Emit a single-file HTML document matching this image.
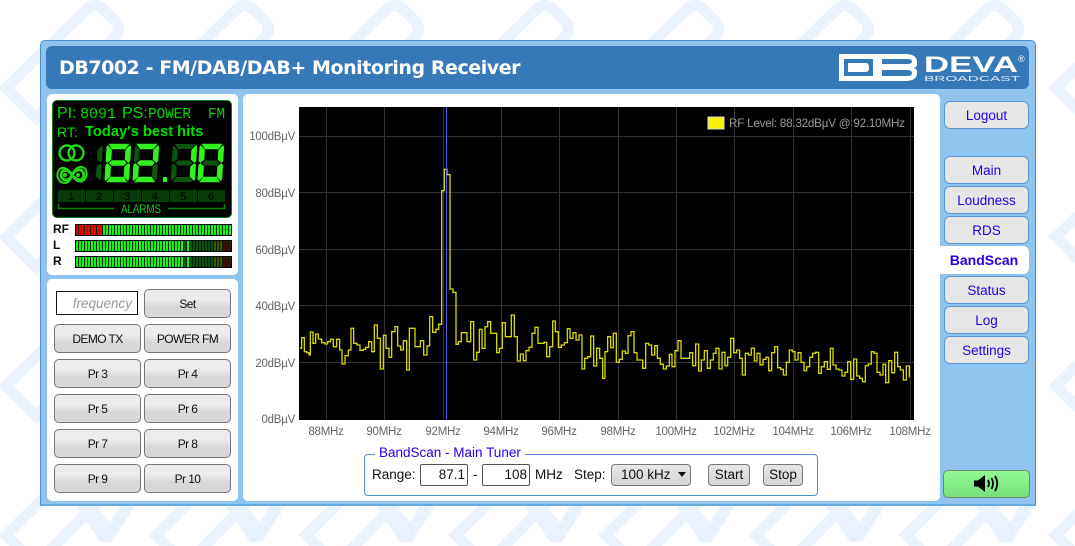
<!DOCTYPE html>
<html><head><meta charset="utf-8"><title>DB7002</title>
<style>
html,body{margin:0;padding:0;background:#fff}
body{width:1075px;height:546px;position:relative;overflow:hidden;font-family:"Liberation Sans",sans-serif;font-size:13.5px;color:#111}
.a{position:absolute;box-sizing:border-box}
.t{position:absolute;white-space:nowrap}
.b{position:absolute;box-sizing:border-box;width:87px;height:29px;border:1px solid #777;border-radius:5px;background:linear-gradient(#ececec 0,#ececec 35%,#d8d8d8 65%,#d8d8d8);text-align:center;font-size:12px;letter-spacing:-.6px;line-height:28px;color:#111}
.n{position:absolute;box-sizing:border-box;left:944px;width:85px;height:28px;border:1px solid #5a96d2;border-radius:6px;background:#e6e6e6;text-align:center;font-size:13.5px;line-height:27px;color:#2200ee}
.m{position:absolute;box-sizing:border-box;left:75px;width:157px;height:12px;border:1px solid #000;background:#000}
.m i{position:absolute;top:0;bottom:0;display:block;background:repeating-linear-gradient(90deg,var(--c) 0,var(--c) 2px,#062006 2px,#062006 3px)}
.s{position:absolute;box-sizing:border-box;height:22px;border:1px solid #777;border-radius:4px;background:linear-gradient(#e8e8e8,#d4d4d4);text-align:center;line-height:20px;font-size:13.5px;color:#111}
.i{position:absolute;box-sizing:border-box;height:22px;top:464px;border:1px solid #555;border-radius:2px;background:#fff;text-align:right;padding-right:2px;line-height:20px;font-size:13.5px;color:#111}
.y,.x{font-size:11.5px;letter-spacing:-.25px;color:#666;line-height:14px}
.y{position:absolute;right:780px;white-space:nowrap}
.x{position:absolute;top:425px;width:60px;text-align:center}
.l{fill:#33f020;stroke:#33f020;stroke-width:.6}.d{fill:#0c560c}
</style></head><body>

<svg class="a" style="left:0;top:0" width="1075" height="546">
<defs><pattern id="w" width="150" height="149" patternUnits="userSpaceOnUse" x="0" y="0">
<g fill="none" stroke="#eaf2fd" stroke-width="11">
<path d="M6 88 L88 8 Q96 2 104 10 L116 22 Q122 30 114 38 L36 118 Z"/>
<path d="M-144 88 L-62 8 Q-54 2 -46 10 L-34 22 Q-28 30 -36 38 L-114 118 Z"/>
<path d="M156 88 L238 8 Q246 2 254 10 L266 22 Q272 30 264 38 L186 118 Z"/>
<path d="M6 237 L88 157 Q96 151 104 159 L116 171 Q122 179 114 187 L36 267 Z"/>
</g>
<polygon points="75,58 95,58 110,75 120,58 135,58 112,95 100,95" fill="#eaf2fd"/>
<text x="0" y="0" transform="translate(103 96) rotate(-45)" font-family="Liberation Sans" font-size="13" fill="#e3eefb" letter-spacing="3">CAST</text>
</pattern></defs>
<rect width="1075" height="546" fill="url(#w)"/>
</svg>

<div class="a" style="left:40px;top:40px;width:996px;height:466px;background:#91c3ef;border:1px solid #4a90d2;border-bottom:2px solid #6aa8e0;border-radius:5px 5px 0 0"></div>
<div class="a" style="left:46px;top:46px;width:983px;height:43px;background:#3679b8;border-radius:6px"></div>
<div class="t" style="left:59px;top:55px;font-family:'DejaVu Sans',sans-serif;font-weight:bold;font-size:19px;line-height:26px;color:#fff;letter-spacing:-.45px">DB7002 - FM/DAB/DAB+ Monitoring Receiver</div>

<svg class="a" style="left:835px;top:48px" width="195" height="40">
<path fill="#fff" d="M4 6H70Q82 6 82 14V16Q82 19 79 20Q82 21 82 24V25Q82 33 70 33H4Z"/>
<path fill="#3679b8" d="M9 11H38V28H9ZM47 11H72Q77 11 77 13.5Q77 16 72 16H47ZM47 22H72Q77 22 77 25Q77 28 72 28H47Z"/>
<path fill="#fff" d="M13 15H31Q34 15 34 19.5Q34 24 31 24H13Z"/>
<text x="89" y="24" font-family="Liberation Sans" font-weight="bold" font-size="22" fill="#fff" textLength="94" lengthAdjust="spacingAndGlyphs">DEVA</text>
<text x="89" y="33" font-family="Liberation Sans" font-size="7" fill="#dce9f6" textLength="96" lengthAdjust="spacingAndGlyphs">BROADCAST</text>
<text x="183" y="14" font-family="Liberation Sans" font-size="9" fill="#fff">®</text>
</svg>

<!-- left panel 1 -->
<div class="a" style="left:47px;top:94px;width:191px;height:181px;background:#fff;border-radius:5px"></div>
<div class="a" style="left:52px;top:100px;width:180px;height:118px;background:#000;border:1px solid #0b7a0b;border-radius:5px"></div>
<div class="t" style="left:57px;top:105px;font-size:16px;line-height:18px;color:#00e000">PI:</div>
<div class="t" style="left:80px;top:106px;font-family:'Liberation Mono',monospace;font-size:15px;line-height:18px;color:#00d800">8091</div>
<div class="t" style="left:122px;top:105px;font-size:16px;line-height:18px;color:#00e000">PS:</div>
<div class="t" style="left:148px;top:106px;font-family:'Liberation Mono',monospace;font-size:14.5px;line-height:18px;color:#00d800;letter-spacing:-.15px;white-space:pre">POWER  FM</div>
<div class="t" style="left:57px;top:123px;font-size:14px;line-height:18px;color:#00e000">RT:</div>
<div class="t" style="left:85px;top:123px;font-weight:bold;font-size:14.7px;line-height:18px;color:#00e000">Today's best hits</div>

<svg class="a" style="left:0;top:0" width="240" height="230">
<title>92.10 MHz</title>
<g fill="none" stroke="#26d41c" stroke-width="2.4">
<circle cx="67" cy="153" r="7.5"/><circle cx="76" cy="153" r="7.5"/>
</g>
<g fill="none" stroke="#26d41c">
<path stroke-width="2" d="M72 175C68 168 62 166 59 170C55 176 59 183 65 183C69 183 71 179 72 175C74 170 78 166 82 167C87 168 88 175 85 179C81 184 75 181 72 175Z"/>
<path stroke-width="3" d="M72 175C69 170 64 169 62 172C60 176 62 180 66 180C69 180 71 178 72 175C74 171 78 169 81 170C84 172 85 176 82 179C79 181 75 179 72 175Z"/>
</g>
<circle cx="65" cy="175" r="2" fill="#26d41c"/><circle cx="78" cy="175" r="2" fill="#26d41c"/>

<g transform="translate(79,144) skewX(-3.5)"><polygon class="d" points="23,1.5 24,3 24,17 22.5,18.5 19,15.5 19,6"/><polygon class="d" points="22.5,19.5 24,21 24,35 23,36.5 19,32.5 19,22.5"/></g>

<g transform="translate(107,144) skewX(-3.5)">
<polygon class="l" points="2,0 22,0 18.5,5 5.5,5"/><polygon class="l" points="23,1.5 24,3 24,17 22.5,18.5 19,15.5 19,6"/><polygon class="l" points="22.5,19.5 24,21 24,35 23,36.5 19,32.5 19,22.5"/><polygon class="l" points="2,38 22,38 18.5,33 5.5,33"/><polygon class="l" points="1.5,19.5 0,21 0,35 1,36.5 5,32.5 5,22.5"/><polygon class="l" points="1.5,18.5 0,17 0,3 1,1.5 5,6 5,15.5"/><polygon class="l" points="6,16.5 18,16.5 20.5,19 18,21.5 6,21.5 3.5,19"/>
</g>
<g transform="translate(135,144) skewX(-3.5)">
<polygon class="l" points="2,0 22,0 18.5,5 5.5,5"/><polygon class="l" points="23,1.5 24,3 24,17 22.5,18.5 19,15.5 19,6"/><polygon class="d" points="22.5,19.5 24,21 24,35 23,36.5 19,32.5 19,22.5"/><polygon class="l" points="2,38 22,38 18.5,33 5.5,33"/><polygon class="l" points="1.5,19.5 0,21 0,35 1,36.5 5,32.5 5,22.5"/><polygon class="d" points="1.5,18.5 0,17 0,3 1,1.5 5,6 5,15.5"/><polygon class="l" points="6,16.5 18,16.5 20.5,19 18,21.5 6,21.5 3.5,19"/>
</g>
<rect x="163" y="177" width="4" height="5" fill="#33f020"/>
<g transform="translate(173,144) skewX(-3.5)">
<polygon class="d" points="2,0 22,0 18.5,5 5.5,5"/><polygon class="l" points="23,1.5 24,3 24,17 22.5,18.5 19,15.5 19,6"/><polygon class="l" points="22.5,19.5 24,21 24,35 23,36.5 19,32.5 19,22.5"/><polygon class="d" points="2,38 22,38 18.5,33 5.5,33"/><polygon class="d" points="1.5,19.5 0,21 0,35 1,36.5 5,32.5 5,22.5"/><polygon class="d" points="1.5,18.5 0,17 0,3 1,1.5 5,6 5,15.5"/><polygon class="d" points="6,16.5 18,16.5 20.5,19 18,21.5 6,21.5 3.5,19"/>
</g>
<g transform="translate(200,144) skewX(-3.5)">
<polygon class="l" points="2,0 22,0 18.5,5 5.5,5"/><polygon class="l" points="23,1.5 24,3 24,17 22.5,18.5 19,15.5 19,6"/><polygon class="l" points="22.5,19.5 24,21 24,35 23,36.5 19,32.5 19,22.5"/><polygon class="l" points="2,38 22,38 18.5,33 5.5,33"/><polygon class="l" points="1.5,19.5 0,21 0,35 1,36.5 5,32.5 5,22.5"/><polygon class="l" points="1.5,18.5 0,17 0,3 1,1.5 5,6 5,15.5"/><polygon class="d" points="6,16.5 18,16.5 20.5,19 18,21.5 6,21.5 3.5,19"/>
</g>

<g fill="#063a06">
<rect x="58" y="190" width="27" height="12"/><rect x="86" y="190" width="27" height="12"/><rect x="114" y="190" width="27" height="12"/><rect x="142" y="190" width="27" height="12"/><rect x="170" y="190" width="27" height="12"/><rect x="198" y="190" width="27" height="12"/>
</g>
<g font-family="Liberation Sans" font-size="11" fill="#000" text-anchor="middle">
<text x="71" y="200">1</text><text x="99" y="200">2</text><text x="127" y="200">3</text><text x="155" y="200">4</text><text x="183" y="200">5</text><text x="211" y="200">6</text>
</g>
<path d="M58.5 204V208.5H114M168 208.5H224.5V204" fill="none" stroke="#0b8a0b" stroke-width="1.5"/>
<text x="121" y="213" font-family="Liberation Sans" font-size="12" fill="#10d010" textLength="40" lengthAdjust="spacingAndGlyphs">ALARMS</text>
</svg>

<div class="t" style="left:53px;top:222px;font-weight:bold;font-size:12px;line-height:14px;color:#111">RF</div>
<div class="t" style="left:53px;top:238px;font-weight:bold;font-size:12px;line-height:14px;color:#111">L</div>
<div class="t" style="left:53px;top:254px;font-weight:bold;font-size:12px;line-height:14px;color:#111">R</div>
<div class="m" style="top:224px"><i style="left:0;width:27px;--c:#ff0000"></i><i style="left:27px;right:0;--c:#10f810"></i></div>
<div class="m" style="top:240px"><i style="left:0;width:108px;--c:#10f810"></i><i style="left:108px;width:3px;--c:#0a5a0a"></i><i style="left:111px;width:3px;--c:#10f810"></i><i style="left:114px;width:24px;--c:#0a500a"></i><i style="left:138px;width:9px;--c:#4a5208"></i><i style="left:147px;right:0;--c:#4a0a05"></i></div>
<div class="m" style="top:256px"><i style="left:0;width:108px;--c:#10f810"></i><i style="left:108px;width:3px;--c:#0a5a0a"></i><i style="left:111px;width:3px;--c:#10f810"></i><i style="left:114px;width:24px;--c:#0a500a"></i><i style="left:138px;width:9px;--c:#4a5208"></i><i style="left:147px;right:0;--c:#4a0a05"></i></div>

<!-- left panel 2 -->
<div class="a" style="left:47px;top:279px;width:191px;height:222px;background:#fff;border-radius:5px"></div>
<div class="a" style="left:56px;top:291px;width:82px;height:24px;border:1px solid #111;background:#fff;text-align:right;padding-right:5px;font-style:italic;font-size:13.5px;line-height:23px;color:#999">frequency</div>
<div class="b" style="left:144px;top:289px">Set</div>
<div class="b" style="left:54px;top:324px">DEMO TX</div><div class="b" style="left:144px;top:324px">POWER FM</div>
<div class="b" style="left:54px;top:359px">Pr 3</div><div class="b" style="left:144px;top:359px">Pr 4</div>
<div class="b" style="left:54px;top:394px">Pr 5</div><div class="b" style="left:144px;top:394px">Pr 6</div>
<div class="b" style="left:54px;top:429px">Pr 7</div><div class="b" style="left:144px;top:429px">Pr 8</div>
<div class="b" style="left:54px;top:464px">Pr 9</div><div class="b" style="left:144px;top:464px">Pr 10</div>

<!-- main panel -->
<div class="a" style="left:243px;top:94px;width:697px;height:407px;background:#fff;border-radius:5px"></div>
<div class="a" style="left:299px;top:107px;width:615px;height:313px;background:#000"></div>

<svg class="a" style="left:0;top:0" width="1075" height="546">
<g stroke="#333" stroke-width="1" fill="none">
<path d="M299 136.5H914M299 192.5H914M299 249.5H914M299 305.5H914M299 362.5H914"/>
<path d="M326.5 107V420M384.5 107V420M443.5 107V420M501.5 107V420M559.5 107V420M618.5 107V420M676.5 107V420M734.5 107V420M793.5 107V420M851.5 107V420M910.5 107V420"/>
</g>
<g fill="none" stroke="#d8d800" stroke-width="1.3" stroke-linejoin="miter">
<path vector-effect="non-scaling-stroke" transform="translate(295 290) scale(.33333)" d="M15 175H20V143H28V185H36V188H42V195H46V126H54V160H62V132H70V147H80V158H90V162H98V155H106V148H115V170H125V148H134V180H141V222H150V197H160V180H168V115H176V160H186V165H195V181H205V178H212V172H221V155H230V185H238V105H247V145H256V237H265V136H273V175H282V202H290V125H300V110H308V168H317V180H325V152H335V240H343V115H360V170H376V152H386V195H396V168H404V80H413V127H423V118H431V103H440V-298H448V-362H456V-346H465V-3H474V7H483V163H490V155H499V128H516V155H527V95H536V210H545V187H553V118H561V175H570V110H578V95H587V130H605V188H613V175H622V98H631V140H649V75H658V140H667V213H676V192H685V212H693V182H702V172H711V130H720V112H729V160H747V157H755V200H764V170H773V93H781V125H790V172H799V165H808V158H817V116H825V145H834V128H843V150H852V135H861V237H869V205H878V200H887V138H896V228H905V175H914V205H923V265H930"/>
<path vector-effect="non-scaling-stroke" transform="translate(600 300) scale(.33333)" d="M15 235V155H23V110H32V143H40V100H49V187H58V178H67V153H76V160H84V107H93V95H102V158H111V180H128V205H137V130H146V135H155V165H164V137H172V175H181V193H190V207H199V198H208V163H216V200H225V152H234V122H243V175H269V158H278V197H287V132H296V213H304V180H313V152H322V205H331V180H340V160H348V145H357V207H366V157H375V197H383V172H392V115H401V158H410V150H419V175H427V225H436V160H445V165H454V145H463V183H471V160H480V195H489V178H498V172H506V212H515V158H524V140H533V203H542V208H550V225H559V187H568V150H577V155H585V180H594V158H603V187H612V212H620V200H629V172H638V160H647V157H656V220H664V200H673V185H682V208H691V145H699V195H708V207H717V210H726V228H735V217H743V185H752V238H761V177H770V228H779V235H787V245H796V197H805V192H814V155H822V160H831V217H840V225H849V193H857V248H866V182H875V218H884V157H893V200H901V210H910V240H919V198H928V232"/>
</g>
<path d="M446.5 107V420" stroke="#5a5af0" stroke-width="1"/>
<rect x="708" y="117" width="16" height="12" fill="#f4f400" stroke="#ddd" stroke-width="1"/>
<text x="729" y="127" font-family="Liberation Sans" font-size="11.7" fill="#9a9a9a" textLength="176">RF Level: 88.32dBµV @ 92.10MHz</text>
</svg>

<div class="y" style="top:130px">100dBµV</div>
<div class="y" style="top:187px">80dBµV</div>
<div class="y" style="top:244px">60dBµV</div>
<div class="y" style="top:300px">40dBµV</div>
<div class="y" style="top:357px">20dBµV</div>
<div class="y" style="top:413px">0dBµV</div>
<div class="x" style="left:296px">88MHz</div>
<div class="x" style="left:354px">90MHz</div>
<div class="x" style="left:413px">92MHz</div>
<div class="x" style="left:471px">94MHz</div>
<div class="x" style="left:529px">96MHz</div>
<div class="x" style="left:588px">98MHz</div>
<div class="x" style="left:646px">100MHz</div>
<div class="x" style="left:704px">102MHz</div>
<div class="x" style="left:763px">104MHz</div>
<div class="x" style="left:821px">106MHz</div>
<div class="x" style="left:880px">108MHz</div>

<!-- fieldset -->
<div class="a" style="left:364px;top:454px;width:454px;height:42px;border:1px solid #4a90d2;border-radius:4px"></div>
<div class="t" style="left:375px;top:445px;background:#fff;padding:0 4px;font-size:13.5px;line-height:16px;color:#2200ee">BandScan - Main Tuner</div>
<div class="t" style="left:372px;top:467px;line-height:16px">Range:</div>
<div class="i" style="left:420px;width:48px">87.1</div>
<div class="t" style="left:473px;top:467px;line-height:16px">-</div>
<div class="i" style="left:482px;width:48px">108</div>
<div class="t" style="left:535px;top:467px;line-height:16px">MHz</div>
<div class="t" style="left:574px;top:467px;line-height:16px">Step:</div>
<div class="s" style="left:611px;top:464px;width:80px;text-align:left;padding-left:9px">100 kHz</div>
<svg class="a" style="left:678px;top:472px" width="9" height="6"><path d="M0 0H8L4 5Z" fill="#111"/></svg>
<div class="s" style="left:708px;top:464px;width:42px">Start</div>
<div class="s" style="left:763px;top:464px;width:40px">Stop</div>

<!-- nav -->
<div class="n" style="top:101px">Logout</div>
<div class="n" style="top:156px">Main</div>
<div class="n" style="top:186px">Loudness</div>
<div class="n" style="top:216px">RDS</div>
<div class="a" style="left:939px;top:246px;width:90px;height:28px;background:#fff;border-radius:0 6px 6px 0;text-align:center;font-weight:bold;font-size:14px;line-height:28px;color:#2200ee">BandScan</div>
<div class="n" style="top:276px">Status</div>
<div class="n" style="top:306px">Log</div>
<div class="n" style="top:336px">Settings</div>
<div class="a" style="left:943px;top:470px;width:87px;height:28px;border:1px solid #6a8a6a;border-radius:5px;background:linear-gradient(#92fa92,#78e078)"></div>
<svg class="a" style="left:973px;top:474px" width="28" height="20">
<path d="M1 6.5H5L12 1V18L5 12.5H1Z" fill="#000"/>
<g fill="none" stroke="#000" stroke-width="1.8"><path d="M15 6Q17 9.5 15 13"/><path d="M18.5 4Q21.5 9.5 18.5 15"/><path d="M22 2Q26.5 9.5 22 17"/></g>
</svg>
</body></html>
